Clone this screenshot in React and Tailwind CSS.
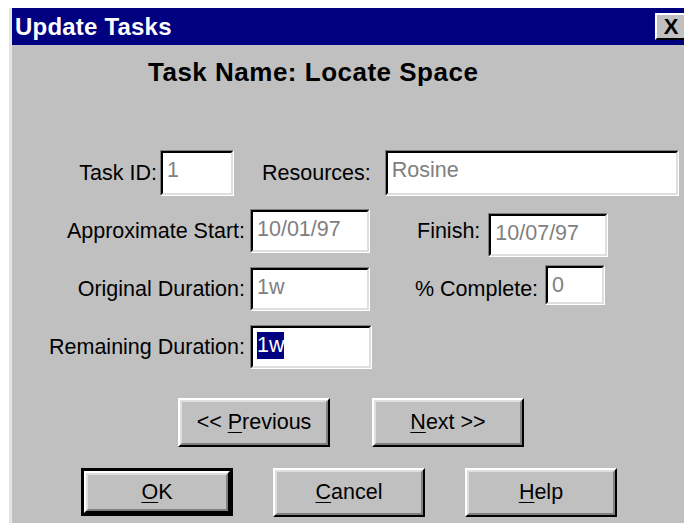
import React from 'react';

// Win95-style sunken edit box
function Field({ value, width, height = 'h-[44px]', selected = false, extra = '' }) {
  return (
    <div className={`${width} ${height} ${extra} shrink-0 border border-t-[#808080] border-l-[#808080] border-b-white border-r-white`}>
      <div className="h-full border-2 border-t-black border-l-black border-b-[#dfdfdf] border-r-[#dfdfdf] bg-white pl-[4px] pt-[1px]">
        {selected ? (
          <span className="bg-[#000080] text-white leading-[27px] inline-block">{value}</span>
        ) : (
          <span className="text-[#808080] leading-[27px] inline-block">{value}</span>
        )}
      </div>
    </div>
  );
}

// Raised push button, with the extra black frame for the default one
function PushButton({ children, isDefault = false }) {
  const body = (
    <div className="h-full border-2 border-t-white border-l-white border-b-black border-r-black">
      <div className="h-full border-2 border-t-[#dfdfdf] border-l-[#dfdfdf] border-b-[#808080] border-r-[#808080] flex items-center justify-center text-black">
        <span>{children}</span>
      </div>
    </div>
  );
  if (isDefault) {
    return <div className="w-[152px] h-[48px] border-[3px] border-black">{body}</div>;
  }
  return <div className="w-[152px] h-[49px]">{body}</div>;
}

const U = ({ children }) => <span className="underline underline-offset-[3px] decoration-1">{children}</span>;

export default function App() {
  return (
    <div className="w-[684px] h-[523px] overflow-hidden bg-white pt-[8px] pl-[9px] text-[21.5px] text-black" style={{ fontFamily: '"Liberation Sans", Arial, sans-serif' }}>
      <div className="w-[680px] h-[520px] bg-[#c0c0c0] border-l-[3px] border-[#e4e4e4] flex flex-col">
        {/* title bar */}
        <div className="h-[37px] bg-[#000080] flex items-center justify-between pl-[3px] pr-[2px] shrink-0">
          <span className="text-white font-bold text-[24px] leading-none tracking-[0.2px]">Update Tasks</span>
          <div className="w-[32px] h-[27px] bg-[#c0c0c0] border-2 border-t-white border-l-white border-b-black border-r-[#404040] flex items-center justify-center">
            <span className="font-bold text-[22px] leading-none text-black">X</span>
          </div>
        </div>

        <div className="mt-[12px] pl-[136px] font-bold text-[26px] leading-[30px] tracking-[0.5px]">Task Name: Locate Space</div>

        {/* row 1 */}
        <div className="mt-[63px] flex items-center">
          <div className="w-[145px] text-right">Task ID:</div>
          <Field value="1" width="w-[74px] ml-[3px]" height="h-[46px]" />
          <div className="ml-[28px]">Resources:</div>
          <Field value="Rosine" width="w-[294px] ml-[14px]" height="h-[46px]" />
        </div>

        {/* row 2 */}
        <div className="mt-[13px] flex items-center">
          <div className="w-[233px] text-right">Approximate Start:</div>
          <Field value="10/01/97" width="w-[120px] ml-[5px]" />
          <div className="ml-[47px]">Finish:</div>
          <Field value="10/07/97" width="w-[120px] ml-[8px]" extra="mt-[4px] -mb-[4px]" />
        </div>

        {/* row 3 */}
        <div className="mt-[14px] flex items-center">
          <div className="w-[233px] text-right">Original Duration:</div>
          <Field value="1w" width="w-[120px] ml-[5px]" />
          <div className="ml-[45px]">% Complete:</div>
          <Field value="0" width="w-[60px] ml-[7px]" height="h-[40px]" extra="-mt-[4px] mb-[4px]" />
        </div>

        {/* row 4 */}
        <div className="mt-[14px] flex items-center">
          <div className="w-[233px] text-right">Remaining Duration:</div>
          <Field value="1w" width="w-[122px] ml-[5px]" selected />
        </div>

        <div className="mt-[29px] pl-[166px] flex gap-[42px]">
          <PushButton>&lt;&lt; <U>P</U>revious</PushButton>
          <PushButton><U>N</U>ext &gt;&gt;</PushButton>
        </div>

        <div className="mt-[21px] pl-[69px] flex gap-[40px]">
          <PushButton isDefault><U>O</U>K</PushButton>
          <PushButton><U>C</U>ancel</PushButton>
          <PushButton><U>H</U>elp</PushButton>
        </div>
      </div>
    </div>
  );
}
